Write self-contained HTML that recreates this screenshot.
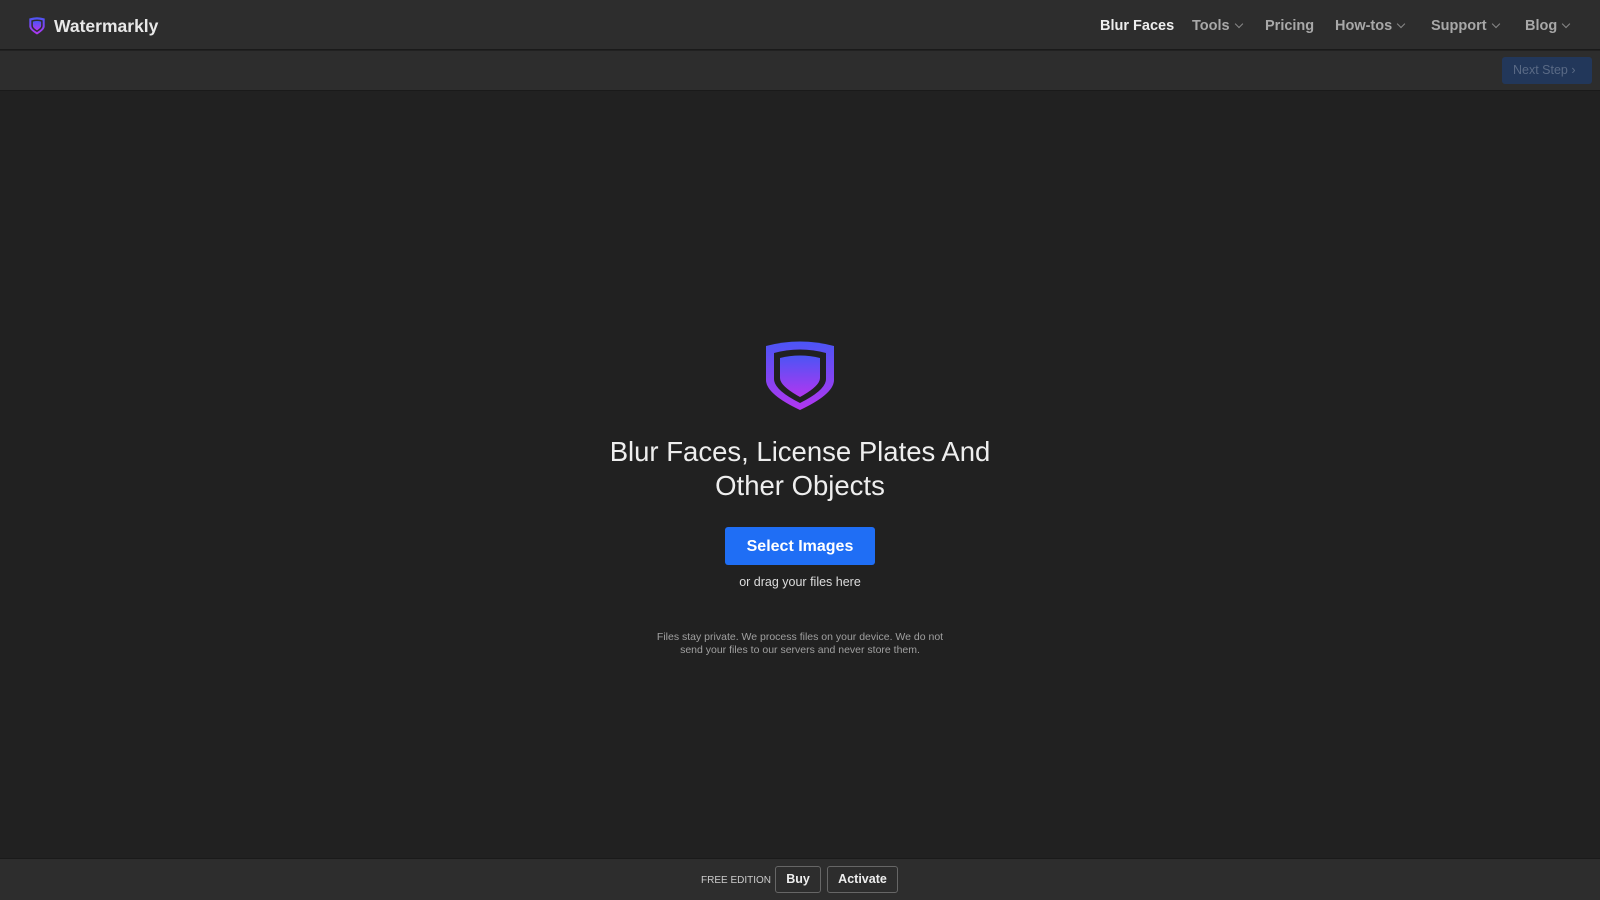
<!DOCTYPE html>
<html><head><style>
*{margin:0;padding:0;box-sizing:border-box}
body{width:1600px;height:900px;background:#212121;font-family:"Liberation Sans",sans-serif;color:#eee;position:relative;overflow:hidden}
.hdr{position:absolute;left:0;top:0;width:1600px;height:50px;background:#2d2d2d;border-bottom:1px solid #1a1a1a}
.sub{position:absolute;left:0;top:51px;width:1600px;height:40px;background:#2d2d2d;border-bottom:1px solid #1a1a1a}
.logo{position:absolute;left:54px;top:16px;font-size:17.5px;font-weight:bold;color:#e8e8e8}
.nav{position:absolute;top:18px;font-size:14.5px;font-weight:bold;color:#a8a8a8}
.chev{display:inline-block;width:6px;height:6px;border-right:1.3px solid #888;border-bottom:1.3px solid #888;transform:rotate(45deg);margin-left:6px;position:relative;top:-3px}
.next{position:absolute;left:1502px;top:57px;width:90px;height:27px;background:#22375a;border-radius:3px;color:#5a6a85;font-size:12.5px;line-height:27px;padding-left:11px}
.title{position:absolute;left:0;width:1600px;top:435px;text-align:center;font-size:27.5px;line-height:34px;color:#eee}
.btn{position:absolute;left:725px;top:527px;width:150px;height:38px;background:#1f6ef5;border-radius:3px;color:#fff;font-weight:bold;font-size:16px;text-align:center;line-height:40px}
.drag{position:absolute;left:0;width:1600px;top:575px;text-align:center;font-size:12.5px;color:#ddd}
.priv{position:absolute;left:0;width:1600px;top:631px;text-align:center;font-size:10.5px;line-height:12.5px;color:#a0a0a0}
.ftr{position:absolute;left:0;top:858px;width:1600px;height:42px;background:#2d2d2d;border-top:1px solid #1a1a1a}
.fb{position:absolute;top:866px;height:27px;border:1px solid #666;border-radius:3px;font-size:12.5px;font-weight:bold;color:#eee;text-align:center;line-height:25px}
</style></head><body>
<div class="hdr"></div><div class="sub"></div>
<svg style="position:absolute;left:28px;top:16px" width="18" height="19" viewBox="0 0 70 70"><defs><linearGradient id="g" x1="0" y1="0" x2="0" y2="1"><stop offset="0" stop-color="#4b55f5"/><stop offset="1" stop-color="#b236f0"/></linearGradient></defs><path d="M5 8 Q35 -2 65 8 L65 38 Q65 52 35 70 Q5 52 5 38Z" fill="url(#g)"/><path d="M13 15 Q35 8 57 15 L57 37 Q57 48 35 61 Q13 48 13 37Z" fill="#2d2d2d"/><path d="M19 20 Q35 15 51 20 L51 36 Q51 44 35 54 Q19 44 19 36Z" fill="url(#g)"/></svg>
<div class="logo">Watermarkly</div>
<div class="nav" style="left:1100px;color:#eee">Blur Faces</div>
<div class="nav" style="left:1192px">Tools<span class="chev"></span></div>
<div class="nav" style="left:1265px">Pricing</div>
<div class="nav" style="left:1335px">How-tos<span class="chev"></span></div>
<div class="nav" style="left:1431px">Support<span class="chev"></span></div>
<div class="nav" style="left:1525px">Blog<span class="chev"></span></div>
<div class="next">Next Step &#8250;</div>
<svg style="position:absolute;left:765px;top:340px" width="70" height="70" viewBox="0 0 70 70"><defs><linearGradient id="g2" x1="0" y1="0" x2="0" y2="1"><stop offset="0" stop-color="#4b55f5"/><stop offset="1" stop-color="#b236f0"/></linearGradient></defs><path d="M1 6 Q35 -3 69 6 L69 40 Q69 54 35 70 Q1 54 1 40Z" fill="url(#g2)"/><path d="M9 13 Q35 6 61 13 L61 39 Q61 50 35 63 Q9 50 9 39Z" fill="#212121"/><path d="M15 18 Q35 13 55 18 L55 38 Q55 46 35 57 Q15 46 15 38Z" fill="url(#g2)"/></svg>
<div class="title">Blur Faces, License Plates And<br>Other Objects</div>
<div class="btn">Select Images</div>
<div class="drag">or drag your files here</div>
<div class="priv">Files stay private. We process files on your device. We do not<br>send your files to our servers and never store them.</div>
<div class="ftr"></div>
<div style="position:absolute;left:701px;top:875px;font-size:10px;color:#ccc">FREE EDITION</div>
<div class="fb" style="left:775px;width:46px">Buy</div>
<div class="fb" style="left:827px;width:71px">Activate</div>
</body></html>
